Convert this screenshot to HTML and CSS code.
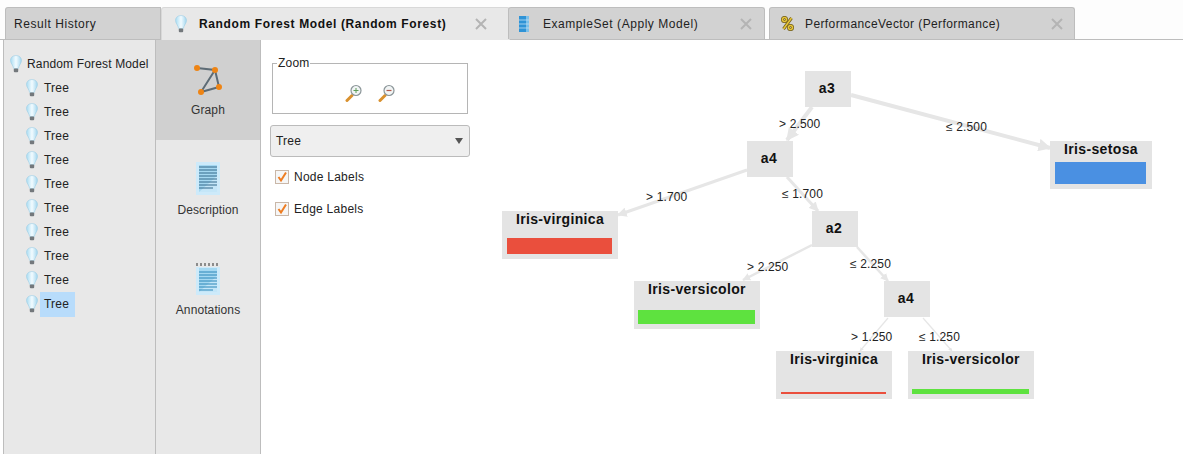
FILE: index.html
```html
<!DOCTYPE html>
<html lang="en">
<head>
  <meta charset="UTF-8">
  <title>Random Forest Model</title>
  <link rel="stylesheet" href="styles.css">
</head>
<body>
  <svg class="defs" width="0" height="0">
    <defs>
      <linearGradient id="glass" x1="0" y1="0" x2="1" y2="0">
        <stop offset="0" stop-color="#a9dcf2"/>
        <stop offset="0.5" stop-color="#f2fbff"/>
        <stop offset="1" stop-color="#a2d6ee"/>
      </linearGradient>
      <symbol id="bulb" viewBox="0 0 12 18">
        <path d="M6 .5C2.6.5.5 2.8.5 5.4c0 2.6 2.5 4.8 3.2 8.1h4.6c.7-3.3 3.2-5.5 3.2-8.1C11.5 2.8 9.4.5 6 .5z" fill="url(#glass)" stroke="#9fcfe4" stroke-width=".6"/>
        <rect x="3.8" y="13.5" width="4.4" height="3.8" rx="1" fill="#73787c"/>
      </symbol>
      <symbol id="lens" viewBox="0 0 18 18">
        <path d="M2 16.5l5-5" stroke="#d9912f" stroke-width="3" stroke-linecap="round"/>
        <circle cx="11" cy="6.5" r="5" fill="#f1f5f5" stroke="#8b9598" stroke-width="1.2"/>
      </symbol>
      <symbol id="cross" viewBox="0 0 12 12">
        <path d="M1 1L11 11M11 1L1 11" stroke="#b4b4b4" stroke-width="2"/>
      </symbol>
      <marker id="head" viewBox="0 0 10 10" refX="9" refY="5" markerWidth="3.2" markerHeight="3.2" orient="auto">
        <path d="M0 0L10 5L0 10z" fill="#e6e6e6"/>
      </marker>
    </defs>
  </svg>

  <!-- tab strip -->
  <div class="tabs">
    <div class="tab tab-history"><span>Result History</span></div>
    <div class="tab tab-active tab-model">
      <svg class="tab-icon bulb-sm"><use href="#bulb"/></svg>
      <span class="tab-title">Random Forest Model (Random Forest)</span>
      <svg class="close"><use href="#cross"/></svg>
    </div>
    <div class="tab tab-example">
      <svg class="tab-icon" width="10" height="16" viewBox="0 0 10 16">
        <rect width="10" height="16" fill="#2f93d6"/>
        <rect x="7" width="3" height="16" fill="#7cc0ea"/>
        <path d="M0 4h10M0 8h10M0 12h10" stroke="#bfe0f5" stroke-width=".8"/>
      </svg>
      <span class="tab-title">ExampleSet (Apply Model)</span>
      <svg class="close"><use href="#cross"/></svg>
    </div>
    <div class="tab tab-perf">
      <svg class="tab-icon" width="13" height="15" viewBox="0 0 13 15">
        <g fill="none" stroke="#6f5a12" stroke-width="3">
          <circle cx="3.5" cy="3.5" r="2"/>
          <circle cx="9.5" cy="11.5" r="2"/>
          <path d="M10.5 2L2.5 13"/>
        </g>
        <g fill="none" stroke="#e5c53c" stroke-width="1.6">
          <circle cx="3.5" cy="3.5" r="2"/>
          <circle cx="9.5" cy="11.5" r="2"/>
          <path d="M10.5 2L2.5 13"/>
        </g>
      </svg>
      <span class="tab-title">PerformanceVector (Performance)</span>
      <svg class="close"><use href="#cross"/></svg>
    </div>
  </div>

  <div class="main">
    <!-- model tree -->
    <div class="tree">
      <div class="tree-row tree-root"><svg class="bulb"><use href="#bulb"/></svg><span>Random Forest Model</span></div>
      <div class="tree-row"><svg class="bulb"><use href="#bulb"/></svg><span>Tree</span></div>
      <div class="tree-row"><svg class="bulb"><use href="#bulb"/></svg><span>Tree</span></div>
      <div class="tree-row"><svg class="bulb"><use href="#bulb"/></svg><span>Tree</span></div>
      <div class="tree-row"><svg class="bulb"><use href="#bulb"/></svg><span>Tree</span></div>
      <div class="tree-row"><svg class="bulb"><use href="#bulb"/></svg><span>Tree</span></div>
      <div class="tree-row"><svg class="bulb"><use href="#bulb"/></svg><span>Tree</span></div>
      <div class="tree-row"><svg class="bulb"><use href="#bulb"/></svg><span>Tree</span></div>
      <div class="tree-row"><svg class="bulb"><use href="#bulb"/></svg><span>Tree</span></div>
      <div class="tree-row"><svg class="bulb"><use href="#bulb"/></svg><span>Tree</span></div>
      <div class="tree-row tree-selected"><svg class="bulb"><use href="#bulb"/></svg><span>Tree</span></div>
    </div>

    <!-- view switcher -->
    <div class="views">
      <div class="view view-active">
        <svg width="30" height="34" viewBox="0 0 30 34">
          <path d="M4 6L22 8L26 25L8 30L22 8" fill="none" stroke="#5d6b75" stroke-width="2"/>
          <circle cx="4" cy="6" r="3" fill="#ee8414"/>
          <circle cx="22" cy="8" r="3" fill="#ee8414"/>
          <circle cx="26" cy="25" r="3" fill="#ee8414"/>
          <circle cx="8" cy="30" r="3" fill="#ee8414"/>
        </svg>
        <span>Graph</span>
      </div>
      <div class="view">
        <svg width="24" height="34" viewBox="0 0 24 34">
          <rect width="24" height="33" fill="#cdeafa"/>
          <rect x="3" y="3" width="18" height="27" fill="#a5d8f1"/>
          <path d="M3 30L21 14V30z" fill="#c4e6f8"/>
          <path d="M3 5h18M3 8h18M3 11h18M3 14h18M3 17h18M3 20h18M3 23h18M3 26h14" stroke="#33688a" stroke-width="1"/>
        </svg>
        <span>Description</span>
      </div>
      <div class="view">
        <svg width="24" height="34" viewBox="0 0 24 34">
          <rect y="5" width="24" height="28" fill="#cdeafa"/>
          <rect x="3" y="6" width="18" height="24" fill="#a5d8f1"/>
          <path d="M3 30L21 14V30z" fill="#c4e6f8"/>
          <path d="M1 1v3M5 1v3M9 1v3M13 1v3M17 1v3M21 1v3" stroke="#666" stroke-width="1.4"/>
          <path d="M3 10h18M3 13h18M3 16h18M3 19h18M3 22h18M3 25h18M3 28h14" stroke="#2b86b8" stroke-width="1"/>
        </svg>
        <span>Annotations</span>
      </div>
    </div>

    <!-- graph options -->
    <div class="options">
      <div class="zoom-box">
        <span class="zoom-legend">Zoom</span>
        <svg class="lens" width="18" height="18"><use href="#lens"/><path d="M8.5 6.5h5M11 4v5" stroke="#5d9c58" stroke-width="1"/></svg>
        <svg class="lens" width="18" height="18"><use href="#lens"/><path d="M8.5 6.5h5" stroke="#b3584a" stroke-width="1.2"/></svg>
      </div>
      <div class="select"><span>Tree</span><i class="select-arrow"></i></div>
      <label class="check"><i class="box"><svg width="12" height="12" viewBox="0 0 12 12"><path d="M2.5 6L5 9.5L10 1.5" fill="none" stroke="#ee7d22" stroke-width="2"/></svg></i>Node Labels</label>
      <label class="check"><i class="box"><svg width="12" height="12" viewBox="0 0 12 12"><path d="M2.5 6L5 9.5L10 1.5" fill="none" stroke="#ee7d22" stroke-width="2"/></svg></i>Edge Labels</label>
    </div>

    <!-- tree diagram -->
    <div class="graph">
      <svg class="edges" width="703" height="414">
        <g stroke="#e6e6e6" fill="none" marker-end="url(#head)">
          <path d="M371 55L570 108" stroke-width="4"/>
          <path d="M332 67L307 100" stroke-width="4"/>
          <path d="M267 130L138 175" stroke-width="3"/>
          <path d="M307 137L338 171" stroke-width="3"/>
          <path d="M332 205L263 240" stroke-width="2.5"/>
          <path d="M377 207L408 241" stroke-width="2.5"/>
          <path d="M408 278L380 311" stroke-width="1.2"/>
          <path d="M443 278L472 311" stroke-width="1.2"/>
        </g>
      </svg>

      <div class="node node-split n1">a3</div>
      <div class="node node-split n2">a4</div>
      <div class="node node-split n3">a2</div>
      <div class="node node-split n4">a4</div>

      <div class="node node-leaf l-setosa">Iris-setosa<i class="bar bar-setosa"></i></div>
      <div class="node node-leaf l-virg1">Iris-virginica<i class="bar bar-virg1"></i></div>
      <div class="node node-leaf l-vers1">Iris-versicolor<i class="bar bar-vers1"></i></div>
      <div class="node node-leaf l-virg2">Iris-virginica<i class="bar bar-virg2"></i></div>
      <div class="node node-leaf l-vers2">Iris-versicolor<i class="bar bar-vers2"></i></div>

      <span class="edge-label e1">&gt; 2.500</span>
      <span class="edge-label e2">&le; 2.500</span>
      <span class="edge-label e3">&gt; 1.700</span>
      <span class="edge-label e4">&le; 1.700</span>
      <span class="edge-label e5">&gt; 2.250</span>
      <span class="edge-label e6">&le; 2.250</span>
      <span class="edge-label e7">&gt; 1.250</span>
      <span class="edge-label e8">&le; 1.250</span>
    </div>
  </div>
</body>
</html>
```

FILE: styles.css
```css
body {
  margin: 0;
  height: 454px;
  overflow: hidden;
  background: #fff;
  font-family: "Liberation Sans", Arial, sans-serif;
  font-size: 12px;
  color: #222;
}
.defs {
  position: absolute;
}

/* tabs */
.tabs {
  display: flex;
  align-items: flex-end;
  height: 40px;
  box-sizing: border-box;
  padding-left: 5px;
  border-bottom: 1px solid #bdbdbd;
  background: #fdfdfd;
}
.tab {
  display: flex;
  align-items: center;
  box-sizing: border-box;
  height: 32px;
  border: 1px solid #bdbdbd;
  border-bottom: none;
  border-radius: 3px 3px 0 0;
  background: #d2d2d2;
  letter-spacing: 0.4px;
  white-space: nowrap;
}
.tab-history {
  width: 156px;
  padding-left: 8px;
  border-radius: 3px 0 0 0;
  letter-spacing: 0.55px;
}
.tab-active {
  height: 33px;
  margin-bottom: -1px;
  background: #e8e8e8;
  border-color: #d8d8d8;
  font-weight: bold;
  color: #111;
}
.tab-model {
  width: 349px;
  padding-left: 13px;
}
.tab-example {
  width: 257px;
  margin-left: -2px;
  padding-left: 10px;
}
.tab-perf {
  width: 306px;
  margin-left: 4px;
  padding-left: 11px;
}
.tab-icon {
  flex: none;
}
.bulb-sm {
  width: 12px;
  height: 18px;
}
.tab-model .tab-title {
  margin-left: 12px;
  letter-spacing: 0.63px;
}
.tab-example .tab-title {
  margin-left: 14px;
  letter-spacing: 0.55px;
}
.tab-perf .tab-title {
  margin-left: 11px;
}
.close {
  flex: none;
  width: 12px;
  height: 12px;
  margin-left: auto;
  margin-right: 22px;
}
.tab-example .close {
  margin-right: 12px;
}
.tab-perf .close {
  margin-right: 11px;
}

/* main row */
.main {
  display: grid;
  grid-template-columns: 153px 105px 220px 703px;
  height: 414px;
  margin-left: 3px;
}
.tree {
  box-sizing: border-box;
  padding-top: 12px;
  border-left: 1px solid #bdbdbd;
  border-right: 1px solid #bdbdbd;
  background: #e8e8e8;
}
.tree-row {
  display: flex;
  align-items: center;
  height: 24px;
  padding-left: 22px;
  letter-spacing: 0.2px;
}
.tree-row span {
  margin-left: 2px;
  padding: 0 6px 0 4px;
  line-height: 25px;
}
.tree-root {
  padding-left: 6px;
  letter-spacing: 0.15px;
}
.tree-root span {
  padding: 0;
  margin-left: 5px;
}
.bulb {
  flex: none;
  width: 12px;
  height: 18px;
}
.tree-selected span {
  background: #b8dcfb;
}

.views {
  border-right: 1px solid #bdbdbd;
  background: #e8e8e8;
}
.view {
  display: flex;
  flex-direction: column;
  align-items: center;
  box-sizing: border-box;
  height: 100px;
  padding-top: 22px;
  gap: 7px;
  letter-spacing: 0.1px;
  color: #333;
}
.view-active {
  background: #d0d0d0;
}

.options {
  display: flex;
  flex-direction: column;
  padding: 23px 0 0 9px;
}
.zoom-box {
  display: flex;
  justify-content: center;
  align-items: center;
  gap: 15px;
  box-sizing: border-box;
  width: 196px;
  height: 51px;
  margin-left: 2px;
  padding-top: 8px;
  border: 1px solid #b5b5b5;
  position: relative;
}
.zoom-legend {
  position: absolute;
  left: 4px;
  top: -8px;
  padding: 0 1px;
  background: #fff;
  letter-spacing: 0.2px;
}
.select {
  display: flex;
  align-items: center;
  justify-content: space-between;
  box-sizing: border-box;
  width: 200px;
  height: 32px;
  margin-top: 11px;
  padding: 0 6px 0 5px;
  border: 1px solid #bbb;
  border-radius: 3px;
  background: #efefef;
  letter-spacing: 0.2px;
}
.select-arrow {
  width: 0;
  height: 0;
  border-left: 4px solid transparent;
  border-right: 4px solid transparent;
  border-top: 6px solid #555;
}
.check {
  display: flex;
  align-items: center;
  height: 14px;
  margin: 13px 0 0 5px;
  gap: 5px;
  letter-spacing: 0.25px;
}
.check + .check {
  margin-top: 18px;
}
.box {
  flex: none;
  width: 12px;
  height: 12px;
  border: 1px solid #c9b7a8;
  background: #f6f6f6;
}
.box svg {
  display: block;
}

/* diagram, coordinates are the content here */
.graph {
  position: relative;
  background: #fff;
}
.edges {
  position: absolute;
  left: -1px;
  top: 0;
}
.node {
  position: absolute;
  box-sizing: border-box;
  background: #e4e4e4;
  font-size: 14px;
  font-weight: bold;
  color: #111;
  text-align: center;
  letter-spacing: 0.35px;
}
.node-split {
  width: 46px;
  height: 36px;
  padding-right: 2px;
  line-height: 34px;
}
.node-leaf {
  height: 48px;
  line-height: 16px;
}
.n1 { left: 324px; top: 31px; }
.n2 { left: 266px; top: 101px; }
.n3 { left: 331px; top: 171px; }
.n4 { left: 403px; top: 241px; }
.l-setosa { left: 569px; top: 101px; width: 102px; }
.l-virg1 { left: 21px; top: 171px; width: 116px; }
.l-vers1 { left: 153px; top: 241px; width: 126px; }
.l-virg2 { left: 295px; top: 311px; width: 116px; }
.l-vers2 { left: 427px; top: 311px; width: 126px; }
.bar {
  position: absolute;
  left: 5px;
  right: 6px;
}
.bar-setosa { top: 21px; height: 22px; background: #4a90e2; }
.bar-virg1 { top: 27px; height: 16px; background: #ea4f3d; }
.bar-vers1 { top: 29px; height: 14px; background: #5ee23f; left: 4px; right: 5px; }
.bar-virg2 { top: 41px; height: 2px; background: #ea4f3d; }
.bar-vers2 { top: 38px; height: 5px; background: #5ee23f; left: 4px; right: 5px; }

.edge-label {
  position: absolute;
  white-space: nowrap;
  line-height: 14px;
  color: #222;
  letter-spacing: 0.15px;
}
.e1 { left: 298px; top: 77px; }
.e2 { left: 465px; top: 80px; }
.e3 { left: 165px; top: 150px; }
.e4 { left: 301px; top: 147px; }
.e5 { left: 266px; top: 220px; }
.e6 { left: 369px; top: 217px; }
.e7 { left: 370px; top: 290px; }
.e8 { left: 438px; top: 290px; }
```
